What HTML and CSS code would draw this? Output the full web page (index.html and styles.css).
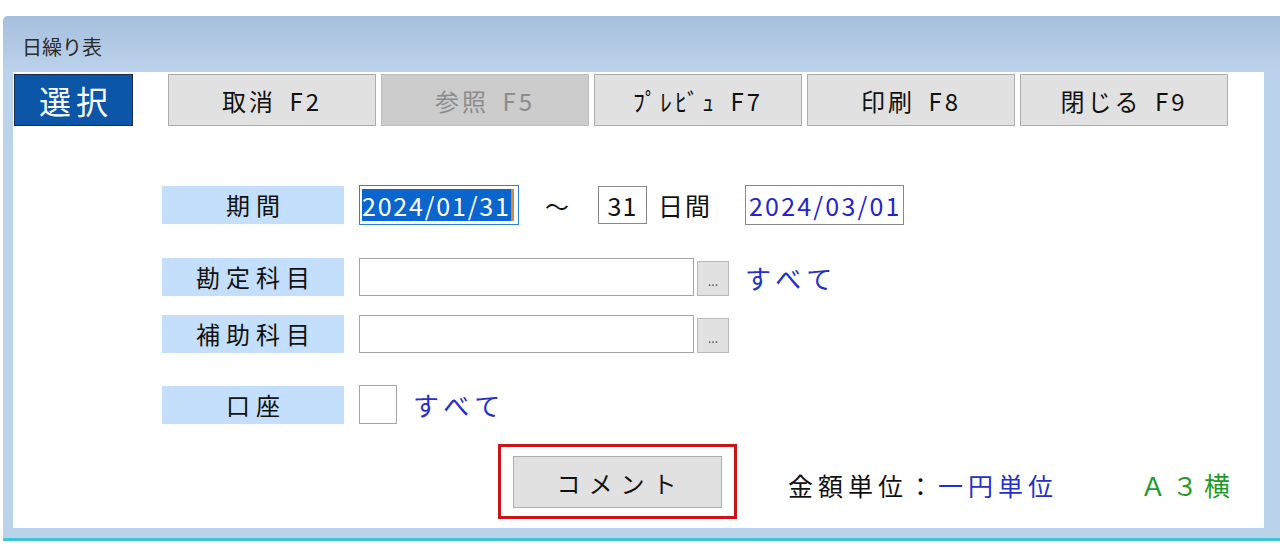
FILE: index.html
```html
<!DOCTYPE html>
<html>
<head>
  <meta charset="utf-8">
  <link rel="stylesheet" href="styles.css">
</head>
<body>
  <div class="window">
    <div class="titlebar">日繰り表</div>
    <div class="client">
      <div class="toolbar">
        <button class="select-btn">選択</button>
        <button class="fn-btn">取消 F2</button>
        <button class="fn-btn disabled">参照 F5</button>
        <button class="fn-btn">ﾌﾟﾚﾋﾞｭ F7</button>
        <button class="fn-btn">印刷 F8</button>
        <button class="fn-btn">閉じる F9</button>
      </div>

      <div class="form">
        <div class="row row-period">
          <span class="label">期間</span>
          <span class="date-box selected"><span class="sel-text">2024/01/31</span><i class="caret"></i></span>
          <span class="tilde">～</span>
          <span class="days-box">31</span>
          <span class="unit">日間</span>
          <span class="date-box end">2024/03/01</span>
        </div>
        <div class="row row-account">
          <span class="label">勘定科目</span>
          <span class="text-box"></span>
          <span class="dots-btn">...</span>
          <span class="all-link">すべて</span>
        </div>
        <div class="row row-sub">
          <span class="label">補助科目</span>
          <span class="text-box"></span>
          <span class="dots-btn">...</span>
        </div>
        <div class="row row-bank">
          <span class="label">口座</span>
          <span class="check-box"></span>
          <span class="all-link">すべて</span>
        </div>
      </div>

      <div class="footer">
        <div class="highlight">
          <button class="comment-btn">コメント</button>
        </div>
        <span class="unit-label">金額単位：</span><span class="unit-value">一円単位</span>
        <span class="paper">Ａ３横</span>
      </div>
    </div>
  </div>
</body>
</html>
```

FILE: styles.css
```css
body {
  margin: 0;
  background: #ffffff;
  font-family: "Noto Sans CJK JP", "Noto Sans", sans-serif;
  color: #111;
}

.window {
  margin: 16px 0 0 3px;
  width: 1264px;
  padding: 0 9px 10px 10px;
  background: #bcd3ec;
  border-right: 2px solid #1c2633;
  border-bottom: 3px solid #3ec3d8;
  border-radius: 5px 5px 0 0;
}

.titlebar {
  height: 56px;
  margin: 0 -9px 0 -10px;
  padding: 16px 0 0 19px;
  box-sizing: border-box;
  background: linear-gradient(#a5bfdd, #bdd3ec);
  border-radius: 5px 5px 0 0;
  font-size: 20px;
  line-height: 30px;
  color: #2b2b2b;
}

.client {
  background: #ffffff;
  width: 1251px;
  height: 456px;
}

.toolbar {
  display: flex;
  padding: 2px 0 0 1px;
}

.toolbar button {
  font-family: "Noto Sans CJK JP", sans-serif;
  height: 52px;
  cursor: pointer;
}

.select-btn {
  width: 119px;
  margin-right: 35px;
  background: #0b56a7;
  border: 1px solid #1c2c4a;
  color: #ffffff;
  font-size: 32px;
  letter-spacing: 5px;
  text-indent: 5px;
  padding: 0;
}

.fn-btn {
  width: 208px;
  margin-right: 5px;
  background: #e1e1e1;
  border: 1px solid #adadad;
  color: #111;
  font-size: 24px;
  letter-spacing: 3px;
  word-spacing: 5px;
  padding: 0;
}

.fn-btn.disabled {
  background: #cccccc;
  border-color: #bdbdbd;
  color: #8c8c8c;
}

.form {
  padding-left: 149px;
}

.row {
  display: flex;
  align-items: center;
}

.row-period {
  margin-top: 59px;
  height: 40px;
}

.row-account {
  margin-top: 33px;
  height: 38px;
}

.row-sub {
  margin-top: 19px;
  height: 38px;
}

.row-bank {
  margin-top: 32px;
  height: 39px;
}

.label {
  width: 182px;
  height: 38px;
  margin-right: 15px;
  background: #c3dffb;
  text-align: center;
  font-size: 24px;
  line-height: 38px;
  letter-spacing: 6px;
  text-indent: 6px;
}

.date-box {
  width: 160px;
  height: 40px;
  box-sizing: border-box;
  border: 1px solid #8a8a8a;
  font-size: 25px;
  line-height: 38px;
  letter-spacing: 2.2px;
  display: flex;
  align-items: center;
}

.date-box.selected {
  border: 1px solid #2f7fdc;
  padding-left: 2px;
  letter-spacing: 1.8px;
}

.sel-text {
  background: #0a66cc;
  color: #ffffff;
  line-height: 32px;
  height: 32px;
}

.caret {
  display: inline-block;
  flex: none;
  width: 3px;
  height: 32px;
  background: #d08a3a;
}

.date-box.end {
  width: 159px;
  margin-left: 33px;
  color: #2626c8;
  padding-left: 3px;
}

.tilde {
  margin-left: 26px;
  font-size: 24px;
  width: 28px;
}

.days-box {
  margin-left: 25px;
  width: 49px;
  height: 38px;
  box-sizing: border-box;
  border: 1px solid #8a8a8a;
  font-size: 25px;
  line-height: 36px;
  text-align: center;
  letter-spacing: 1px;
}

.unit {
  margin-left: 11px;
  font-size: 25px;
  letter-spacing: 2px;
}

.text-box {
  width: 335px;
  height: 38px;
  box-sizing: border-box;
  border: 1px solid #a5a5a5;
}

.dots-btn {
  margin-left: 3px;
  width: 32px;
  height: 35px;
  box-sizing: border-box;
  margin-top: 3px;
  background: #e1e1e1;
  border: 1px solid #b8b8b8;
  font-size: 12px;
  line-height: 38px;
  text-align: center;
  color: #555;
}

.all-link {
  margin-left: 16px;
  font-size: 26px;
  letter-spacing: 6px;
  color: #2430c8;
}

.check-box {
  width: 38px;
  height: 39px;
  box-sizing: border-box;
  border: 1px solid #a5a5a5;
}

.footer {
  display: flex;
  align-items: center;
  margin-top: 20px;
  padding-left: 485px;
}

.highlight {
  width: 239px;
  height: 75px;
  box-sizing: border-box;
  border: 3px solid #c8151d;
  padding: 9px 0 0 12px;
}

.comment-btn {
  width: 209px;
  height: 52px;
  background: #e1e1e1;
  border: 1px solid #adadad;
  font-family: "Noto Sans CJK JP", sans-serif;
  font-size: 24px;
  letter-spacing: 8px;
  text-indent: 6px;
  color: #111;
  padding: 0;
}

.unit-label {
  margin-left: 51px;
  font-size: 25px;
  letter-spacing: 5px;
  margin-top: 6px;
}

.unit-value {
  font-size: 25px;
  letter-spacing: 5px;
  color: #2430c8;
  margin-top: 6px;
}

.paper {
  margin-left: 82px;
  font-size: 26px;
  letter-spacing: 6px;
  color: #1f9a2a;
  margin-top: 6px;
}
```
